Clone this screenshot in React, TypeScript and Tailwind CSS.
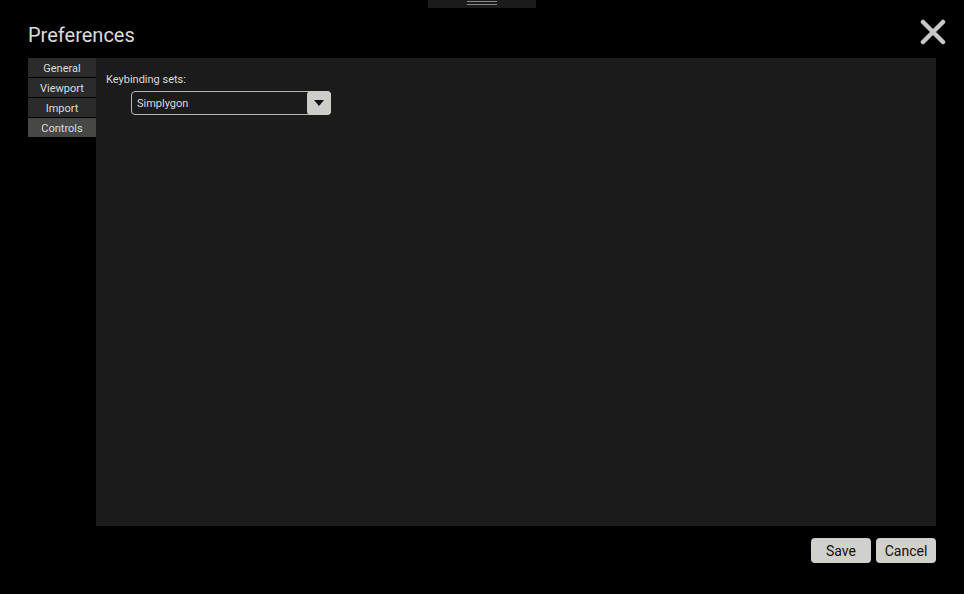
import React from "react";

export default function App() {
  const tabs = ["General", "Viewport", "Import", "Controls"];
  return (
    <div
      className="w-[964px] h-[594px] bg-black flex flex-col overflow-hidden"
      style={{ fontFamily: "Roboto, 'Liberation Sans', sans-serif" }}
    >
      <div className="h-[8px] flex justify-center shrink-0">
        <div className="w-[108px] h-[8px] bg-[#1b1b1b] flex flex-col items-center pt-[1px] gap-[2px]">
          <div className="w-[30px] h-[1px] bg-[#8a8a8a]" />
          <div className="w-[30px] h-[1px] bg-[#8a8a8a]" />
        </div>
      </div>
      <div className="flex items-center justify-between pl-[28px] pr-[18px] h-[50px] shrink-0">
        <div className="text-[20px] leading-[24px] text-[#dcdcdc] mt-[3px]">Preferences</div>
        <svg width="26" height="26" viewBox="0 0 26 26" className="mt-[-2px]">
          <path d="M3 3 L23 23 M23 3 L3 23" stroke="#c8c8c8" strokeWidth="4.5" strokeLinecap="round" />
        </svg>
      </div>
      <div className="flex px-[28px] h-[468px] shrink-0">
        <div className="w-[68px] flex flex-col gap-[1px]">
          {tabs.map((t) => (
            <div
              key={t}
              className={`h-[19px] flex items-center justify-center pt-[2px] text-[11px] leading-[13px] text-[#dcdcdc] ${
                t === "Controls" ? "bg-[#474745]" : "bg-[#2b2b2b]"
              }`}
            >
              {t}
            </div>
          ))}
        </div>
        <div className="flex-1 bg-[#1b1b1b] pt-[15px] pl-[10px]">
          <div className="text-[11px] leading-[13px] text-[#dcdcdc]">Keybinding sets:</div>
          <div className="ml-[25px] mt-[5px] w-[200px] h-[24px] border border-[#b5b5b5] rounded-[4px] flex items-center justify-between">
            <span className="text-[11px] text-[#dcdcdc] pl-[5px] pt-[2px]">Simplygon</span>
            <div className="w-[24px] h-[24px] -mr-[1px] bg-[#cdcdc9] rounded-[4px] flex items-center justify-center">
              <svg width="10" height="6" viewBox="0 0 10 6">
                <path d="M0 0 L10 0 L5 6 Z" fill="#111" />
              </svg>
            </div>
          </div>
        </div>
      </div>
      <div className="flex justify-end gap-[5px] px-[28px] mt-[12px]">
        <button className="w-[60px] h-[25px] bg-[#d0d0cc] rounded-[4px] text-[14px] text-[#111] pt-[2px]">Save</button>
        <button className="w-[60px] h-[25px] bg-[#d0d0cc] rounded-[4px] text-[14px] text-[#111] pt-[2px]">Cancel</button>
      </div>
    </div>
  );
}
